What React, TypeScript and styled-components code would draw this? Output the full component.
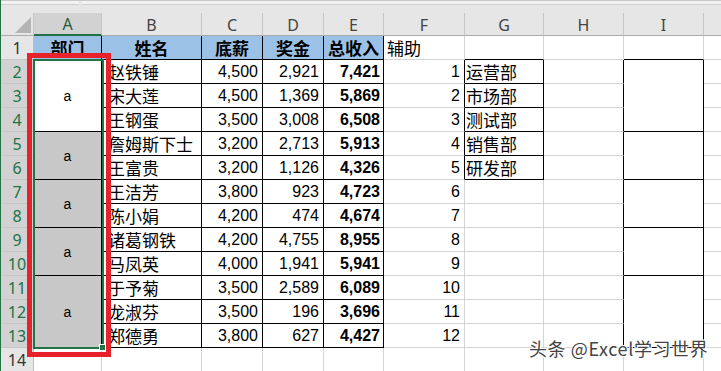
import React from "react";
import styled, { createGlobalStyle } from "styled-components";

const GlobalStyle = createGlobalStyle`
  html, body { margin: 0; padding: 0; background: #ffffff; }
  * { box-sizing: border-box; }
`;

const COL_WIDTHS = [33, 68, 100, 61, 61, 60, 81, 79, 80, 80, 40];
const LETTERS = ["", "A", "B", "C", "D", "E", "F", "G", "H", "I", "J"];

const Frame = styled.div`
  position: relative;
  width: 721px;
  height: 371px;
  overflow: hidden;
  background: #ffffff;
  border-left: 1px solid #217346;
`;

const TopBar = styled.div`
  display: flex;
  gap: 3px;
  height: 13px;
  background: #e6e6e6;
  border-top: 1px solid #c8c8c8;
`;

const BarStub = styled.div<{ $w?: number }>`
  height: 4px;
  width: ${(p) => (p.$w ? `${p.$w}px` : "auto")};
  flex: ${(p) => (p.$w ? "0 0 auto" : "1")};
  background: #f2f2f2;
  border-bottom: 1px solid #cfcfcf;
`;

const Sheet = styled.div`
  display: grid;
  grid-template-columns: ${COL_WIDTHS.map((w) => `${w}px`).join(" ")};
  grid-template-rows: 23px repeat(14, 24px);
`;

const Corner = styled.div`
  grid-row: 1;
  grid-column: 1;
  position: relative;
  background: #e6e6e6;
  border-right: 1px solid #c6c6c6;
  border-bottom: 1px solid #ababab;
`;

const CornerTriangle = styled.div`
  position: absolute;
  right: 2px;
  bottom: 2px;
  width: 0;
  height: 0;
  border-left: 16px solid transparent;
  border-bottom: 16px solid #b4b4b4;
`;

const ColHeader = styled.div<{ $c: number; $sel: boolean }>`
  grid-row: 1;
  grid-column: ${(p) => p.$c + 1};
  display: flex;
  align-items: center;
  justify-content: center;
  background: ${(p) => (p.$sel ? "#d2d2d2" : "#e6e6e6")};
  color: ${(p) => (p.$sel ? "#1f5b39" : "#444444")};
  border-right: 1px solid #c6c6c6;
  border-bottom: ${(p) => (p.$sel ? "2px solid #217346" : "1px solid #ababab")};
  font-family: "Noto Sans", "Liberation Sans", sans-serif;
  font-size: 16px;
  line-height: 1;
  padding-top: 1px;
`;

const RowHeader = styled.div<{ $r: number; $sel: boolean }>`
  grid-row: ${(p) => p.$r + 1};
  grid-column: 1;
  display: flex;
  align-items: center;
  justify-content: center;
  background: ${(p) => (p.$sel ? "#d2d2d2" : "#e6e6e6")};
  color: ${(p) => (p.$sel ? "#217346" : "#333333")};
  border-right: ${(p) => (p.$sel ? "1px solid #217346" : "1px solid #bdbdbd")};
  border-bottom: 1px solid #c6c6c6;
  font-family: "Noto Sans", "Liberation Sans", sans-serif;
  font-size: 16px;
  line-height: 1;
`;

type Kind = "cjk" | "num" | "small" | "none";

const FONT: Record<Kind, string> = {
  cjk: `font-family: "Noto Sans CJK SC", "Noto Sans", sans-serif; font-size: 17px;`,
  num: `font-family: "Liberation Sans", Arial, sans-serif; font-size: 16px;`,
  small: `font-family: "Liberation Sans", Arial, sans-serif; font-size: 14px;`,
  none: ``,
};

const Cell = styled.div<{
  $r: number;
  $c: number;
  $span: number;
  $br: boolean;
  $bb: boolean;
  $bg: string;
  $align: "left" | "center" | "right";
  $bold: boolean;
  $kind: Kind;
  $indent: number;
}>`
  grid-row: ${(p) => p.$r + 1} / span ${(p) => p.$span};
  grid-column: ${(p) => p.$c + 1};
  display: flex;
  align-items: center;
  justify-content: ${(p) =>
    p.$align === "left" ? "flex-start" : p.$align === "right" ? "flex-end" : "center"};
  padding: ${(p) =>
    p.$align === "left" ? `0 0 0 ${p.$indent}px` : p.$align === "right" ? `0 ${p.$indent}px 0 0` : "0"};
  background: ${(p) => p.$bg};
  border-right: 1px solid ${(p) => (p.$br ? "#000000" : "#d4d4d4")};
  border-bottom: 1px solid ${(p) => (p.$bb ? "#000000" : "#d4d4d4")};
  color: #000000;
  font-weight: ${(p) => (p.$bold ? 700 : 400)};
  line-height: 1;
  white-space: nowrap;
  overflow: hidden;
  ${(p) => FONT[p.$kind]}
`;

const RedFrame = styled.div`
  position: absolute;
  left: 26px;
  top: 53px;
  width: 84px;
  height: 304px;
  border: 5px solid #e8222b;
  pointer-events: none;
`;

const Selection = styled.div`
  position: absolute;
  left: 32px;
  top: 59px;
  width: 71px;
  height: 290px;
  border: 2px solid #217346;
  pointer-events: none;
`;

const FillHandle = styled.div`
  position: absolute;
  right: -4px;
  bottom: -4px;
  width: 7px;
  height: 7px;
  background: #217346;
  border: 1px solid #ffffff;
`;

const Watermark = styled.div`
  position: absolute;
  left: 528px;
  top: 339px;
  font-family: "Noto Sans CJK SC", "Noto Sans", sans-serif;
  font-size: 18px;
  line-height: 1;
  color: #444444;
  letter-spacing: 0.6px;
  text-shadow: 1px 1px 0 #ffffff, -1px -1px 0 #ffffff, 1px -1px 0 #ffffff, -1px 1px 0 #ffffff;
`;

const names = ["赵铁锤", "宋大莲", "王钢蛋", "詹姆斯下士", "王富贵", "王洁芳", "陈小娟", "诸葛钢铁", "马凤英", "于予菊", "龙淑芬", "郑德勇"];
const base = ["4,500", "4,500", "3,500", "3,200", "3,200", "3,800", "4,200", "4,200", "4,000", "3,500", "3,500", "3,800"];
const bonus = ["2,921", "1,369", "3,008", "2,713", "1,126", "923", "474", "4,755", "1,941", "2,589", "196", "627"];
const total = ["7,421", "5,869", "6,508", "5,913", "4,326", "4,723", "4,674", "8,955", "5,941", "6,089", "3,696", "4,427"];
const depts = ["运营部", "市场部", "测试部", "销售部", "研发部"];
const merges: [number, number][] = [
  [2, 3],
  [5, 2],
  [7, 2],
  [9, 2],
  [11, 3],
];
const mergeEnds = [1, 4, 6, 8, 10, 13];

type CellSpec = {
  r: number;
  c: number;
  span: number;
  text: string;
  bg: string;
  align: "left" | "center" | "right";
  bold: boolean;
  kind: Kind;
  indent: number;
};

function blackRight(r: number, c: number, span: number) {
  const last = r + span - 1;
  if (c >= 1 && c <= 5) return last <= 13;
  if (c === 6 || c === 7) return r >= 2 && last <= 6;
  if (c === 8 || c === 9) return r >= 2 && last <= 13;
  return false;
}

function blackBottom(last: number, c: number) {
  if (c >= 2 && c <= 5) return last <= 13;
  if (c === 1 || c === 9) return mergeEnds.includes(last);
  if (c === 7) return last <= 6;
  return false;
}

function buildCells(): CellSpec[] {
  const out: CellSpec[] = [];
  const blank = (r: number, c: number, span = 1, bg = "#ffffff"): CellSpec => ({
    r, c, span, text: "", bg, align: "left", bold: false, kind: "none", indent: 0,
  });
  const heads = ["部门", "姓名", "底薪", "奖金", "总收入"];
  heads.forEach((h, i) =>
    out.push({ r: 1, c: i + 1, span: 1, text: h, bg: "#9bc2e6", align: "center", bold: true, kind: "cjk", indent: 0 })
  );
  out.push({ r: 1, c: 6, span: 1, text: "辅助", bg: "#ffffff", align: "left", bold: false, kind: "cjk", indent: 3 });
  [7, 8, 9, 10].forEach((c) => out.push(blank(1, c)));

  merges.forEach(([r, span], i) => {
    out.push({
      r, c: 1, span, text: "a", bg: i === 0 ? "#ffffff" : "#c8c8c8", align: "center", bold: false, kind: "small", indent: 0,
    });
    out.push(blank(r, 9, span));
  });

  for (let r = 2; r <= 13; r++) {
    const i = r - 2;
    out.push({ r, c: 2, span: 1, text: names[i], bg: "#ffffff", align: "left", bold: false, kind: "cjk", indent: 6 });
    out.push({ r, c: 3, span: 1, text: base[i], bg: "#ffffff", align: "right", bold: false, kind: "num", indent: 4 });
    out.push({ r, c: 4, span: 1, text: bonus[i], bg: "#ffffff", align: "right", bold: false, kind: "num", indent: 4 });
    out.push({ r, c: 5, span: 1, text: total[i], bg: "#ffffff", align: "right", bold: true, kind: "num", indent: 3 });
    out.push({ r, c: 6, span: 1, text: String(r - 1), bg: "#ffffff", align: "right", bold: false, kind: "num", indent: 4 });
    if (r <= 6) {
      out.push({ r, c: 7, span: 1, text: depts[i], bg: "#ffffff", align: "left", bold: false, kind: "cjk", indent: 1 });
    } else {
      out.push(blank(r, 7));
    }
    out.push(blank(r, 8));
    out.push(blank(r, 10));
  }
  for (let c = 1; c <= 10; c++) out.push(blank(14, c));
  return out;
}

const cells = buildCells();

export default function App() {
  return (
    <>
      <GlobalStyle />
      <Frame>
        <TopBar>
          <BarStub $w={78} />
          <BarStub />
        </TopBar>
        <Sheet>
          <Corner>
            <CornerTriangle />
          </Corner>
          {LETTERS.slice(1).map((l, i) => (
            <ColHeader key={l} $c={i + 1} $sel={l === "A"}>
              {l === "J" ? "" : l}
            </ColHeader>
          ))}
          {Array.from({ length: 14 }, (_, i) => i + 1).map((r) => (
            <RowHeader key={r} $r={r} $sel={r >= 2 && r <= 13}>
              {r}
            </RowHeader>
          ))}
          {cells.map((s) => (
            <Cell
              key={`${s.r}-${s.c}`}
              $r={s.r}
              $c={s.c}
              $span={s.span}
              $br={blackRight(s.r, s.c, s.span)}
              $bb={blackBottom(s.r + s.span - 1, s.c)}
              $bg={s.bg}
              $align={s.align}
              $bold={s.bold}
              $kind={s.kind}
              $indent={s.indent}
            >
              {s.text}
            </Cell>
          ))}
        </Sheet>
        <Selection>
          <FillHandle />
        </Selection>
        <RedFrame />
        <Watermark>头条 @Excel学习世界</Watermark>
      </Frame>
    </>
  );
}
